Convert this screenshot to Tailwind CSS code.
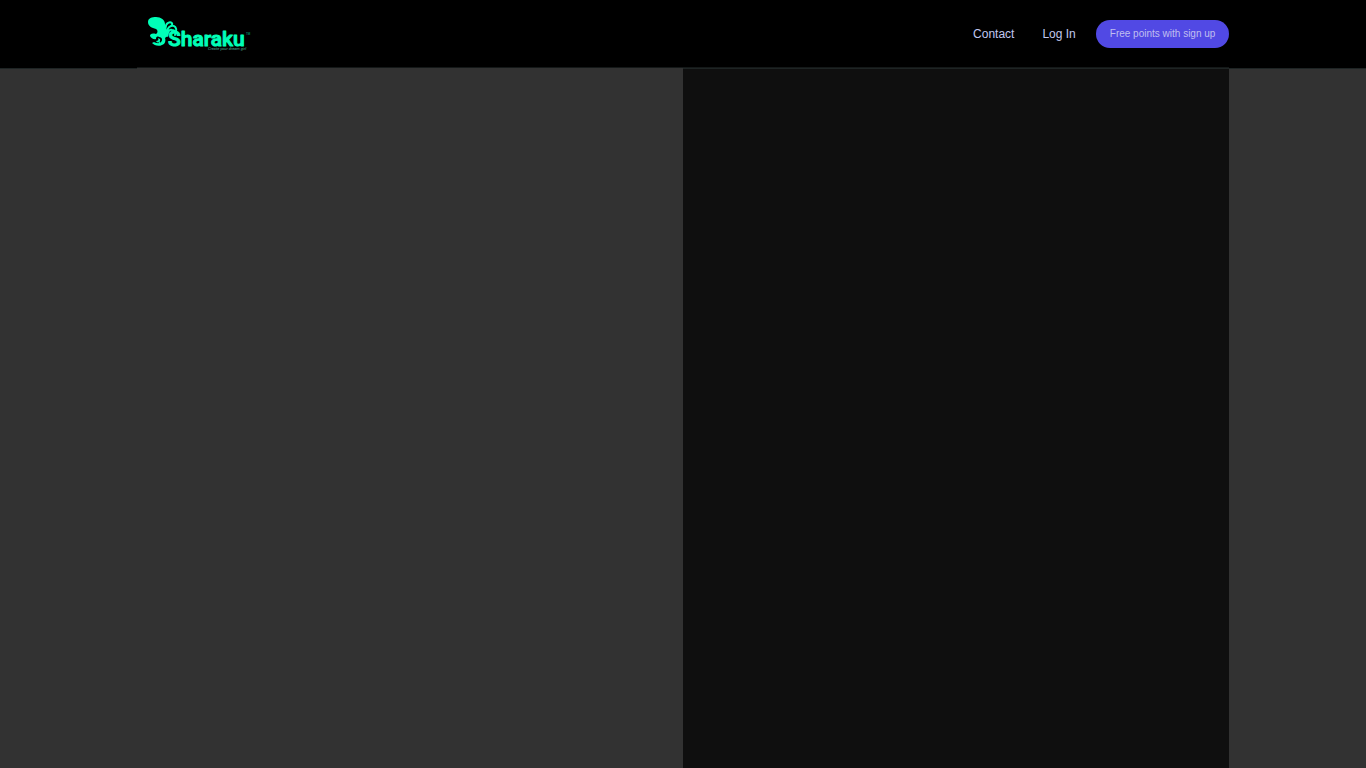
<!DOCTYPE html>
<html lang="en">

<head>
    <meta charset="UTF-8">
    <meta name="viewport" content="width=device-width, initial-scale=1.0">
    <title>Sharaku - Create your dream girl</title>
    <script src="https://cdn.jsdelivr.net/npm/@tailwindcss/browser@4"></script>
</head>

<body class="min-h-screen flex flex-col bg-[#323232] font-['Liberation_Sans',Arial,sans-serif]">
    <header class="bg-black border-b border-[#1e2424] px-[10%]">
        <div class="h-17 flex items-center justify-between border-b border-[#141818]">
            <a href="/" class="ml-[11px]" aria-label="Sharaku">
                <svg class="block w-[104px] h-9" viewBox="0 0 104 36" fill="none">
                    <!-- octopus -->
                    <path fill="#00ffb7" d="M0 6C0 2 4 1 8 1C13 1 17 4 17 8C17 11 18 12 19 14C20 17 20 20 17 22C18 25 17 28 14 29C10 31 6 29 4 27L6 26C8 27 11 28 13 26C15 24 14 21 11 21C9 20 8 21 8 23C6 24 3 22 2 20C2 18 4 17 8 18C10 17 10 14 8 13C4 12 0 10 0 6Z" />
                    <path fill="#00ffb7" d="M8 25C10 25 11 24 10 22L12 23C13 26 10 28 8 25Z" />
                    <path stroke="#00ffb7" stroke-width="2" stroke-linecap="round" d="M17 15C18 12 17 8 20 7C23 5 26 8 23 10M19 18C19 14 20 11 23 10C27 9 29 12 28 16M19 20C20 16 21 13 24 14C27 14 28 16 27 19" />
                    <text x="20" y="30" fill="#00ffb7" stroke="#00ffb7" stroke-width="1" stroke-linejoin="round" class="font-['Roboto',sans-serif] font-medium text-[21px]">Sharaku</text>
                    <text x="98" y="19" fill="#00b985" class="text-[3px]">TM</text>
                    <text x="60" y="34" fill="#4fae96" class="font-['Roboto',sans-serif] text-[4px] italic">Create your dream girl</text>
                </svg>
            </a>
            <nav class="flex items-center text-xs text-[#c0c8f0]">
                <a href="/contact">Contact</a>
                <a href="/login" class="ml-7">Log In</a>
                <button type="button" class="ml-5 h-7 px-[14px] rounded-full bg-[#5149e4] text-[10px] text-[#c0bff0] whitespace-nowrap">Free points with sign up</button>
            </nav>
        </div>
    </header>
    <main class="grow grid grid-cols-2 px-[10%]">
        <section class="-mt-px bg-[#323232]"></section>
        <section class="bg-[#0f0f0f]"></section>
    </main>
</body>

</html>
